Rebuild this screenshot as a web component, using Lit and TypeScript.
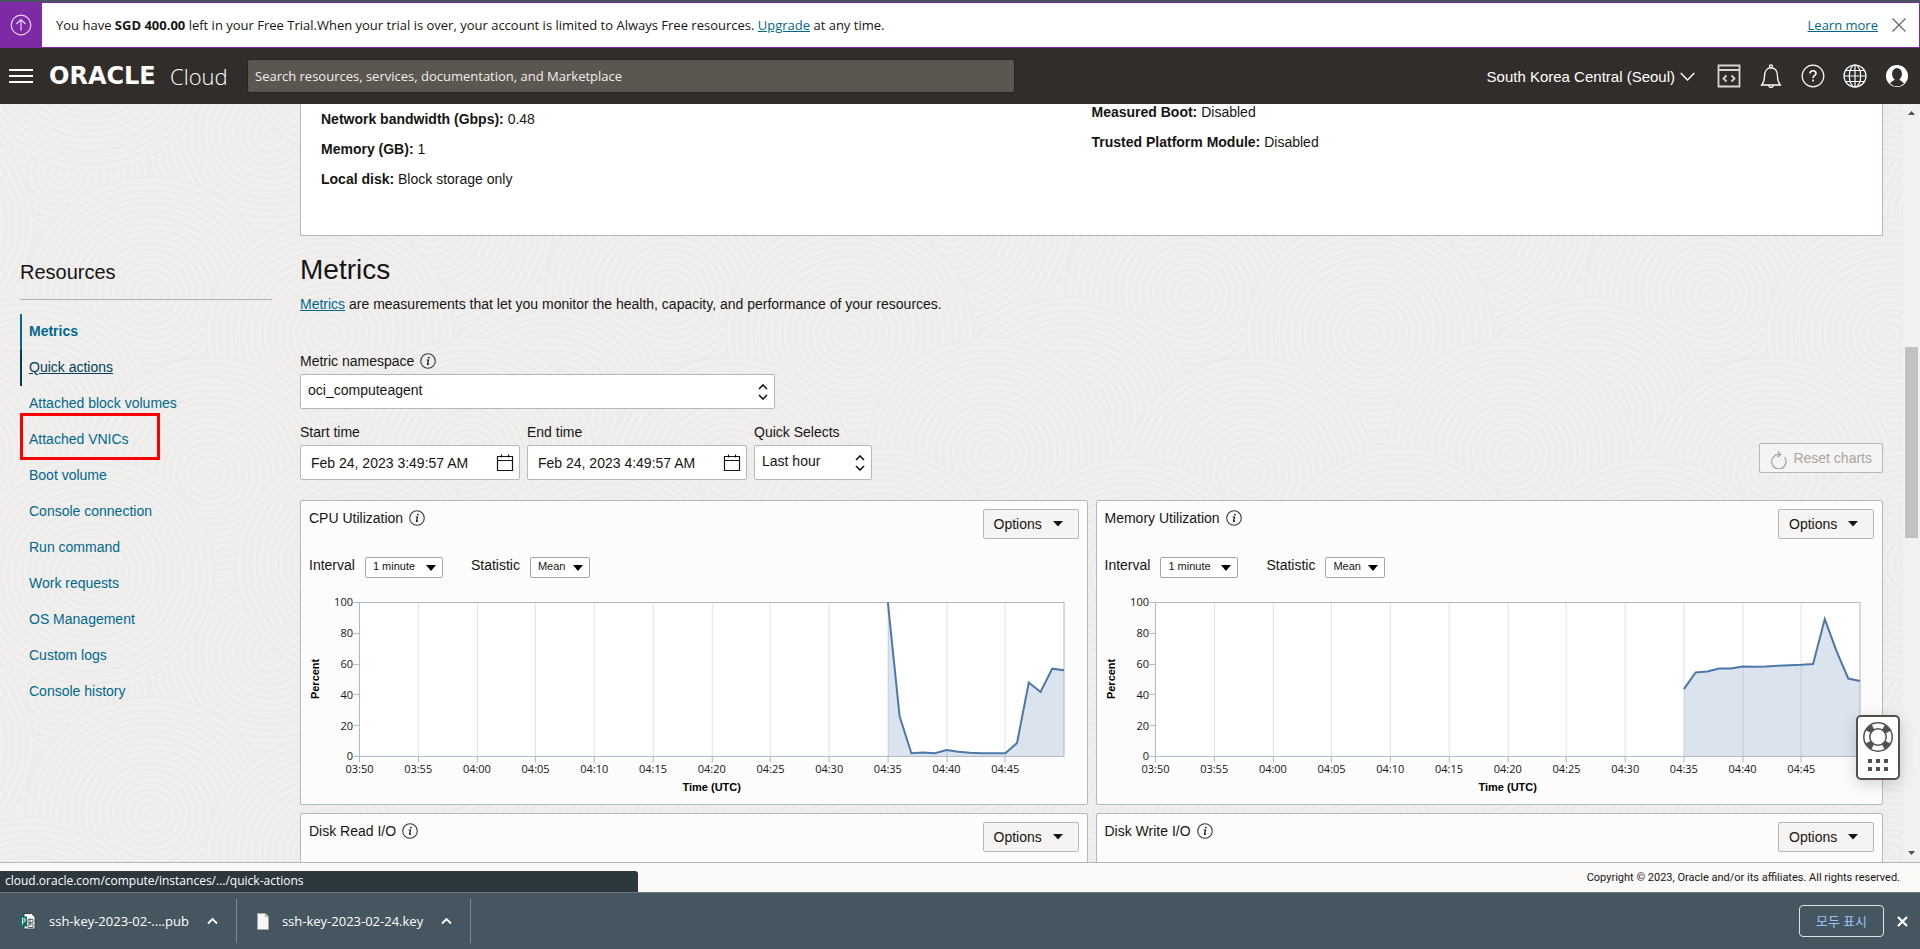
import { LitElement, html, svg, css, unsafeCSS } from "lit";
import { customElement, property } from "lit/decorators.js";

const uri = (s: string) => unsafeCSS(`url("data:image/svg+xml,${encodeURIComponent(s)}")`);

/* Faint overlapping ring texture used behind the console */
const rings = (): string => {
  const size = 520;
  const seeds = [
    [60, 70], [270, 30], [430, 120], [150, 190], [330, 230], [30, 310],
    [470, 350], [210, 370], [90, 470], [360, 460],
  ];
  let out = "";
  for (const [cx, cy] of seeds) {
    for (const dx of [-size, 0, size]) {
      for (const dy of [-size, 0, size]) {
        const x = cx + dx;
        const y = cy + dy;
        if (x < -130 || y < -130 || x > size + 130 || y > size + 130) continue;
        for (let r = 124; r > 4; r -= 7) {
          out += `<ellipse cx="${x}" cy="${y}" rx="${r}" ry="${r * 0.94}" fill="#f0efed" stroke="#ecebe9" stroke-width="2"/>`;
        }
      }
    }
  }
  return `<svg xmlns="http://www.w3.org/2000/svg" width="${size}" height="${size}">${out}</svg>`;
};

const updown = uri(
  `<svg xmlns="http://www.w3.org/2000/svg" width="10" height="16" fill="none" stroke="#161513" stroke-width="1.6"><path d="M1 5l4-4 4 4M1 11l4 4 4-4"/></svg>`
);
const down = uri(
  `<svg xmlns="http://www.w3.org/2000/svg" width="10" height="6"><path d="M0 0h10l-5 6z" fill="#000"/></svg>`
);

const shared = css`
  *, *::before, *::after { box-sizing: border-box; }
  button, input, select { font: inherit; color: inherit; margin: 0; }
  button { cursor: pointer; }
  a { color: #00688c; }
  svg { display: block; flex: none; }
  select { appearance: none; cursor: pointer; }
  .btn {
    display: flex; align-items: center; height: 30px; padding: 0 10px;
    background: #f5f4f2; border: 1px solid #bbb6b1; border-radius: 2px; font-size: 14px;
  }
`;

const infoIcon = html`<svg width="16" height="16" viewBox="0 0 16 16" aria-label="Info">
  <circle cx="8" cy="8" r="7.3" fill="none" stroke="#3a3632" stroke-width="1.1" />
  <circle cx="8.9" cy="4.6" r="0.9" fill="#161513" />
  <path d="M6.7 7h1.800l-1 4q0 .8 1.400-.3" fill="none" stroke="#161513" stroke-width="1.2" />
</svg>`;

@customElement("metric-card")
export class MetricCard extends LitElement {
  @property() heading = "";
  @property({ attribute: false }) values: number[] = [];

  static styles = [
    shared,
    css`
      :host {
        display: block; background: #fcfcfc; border: 1px solid #b0b8c2; border-radius: 2px; min-height: 305px;
        font-family: "Liberation Sans", Arial, sans-serif; font-size: 14px; color: #161513;
      }
      .head { display: flex; justify-content: space-between; align-items: flex-start; padding: 8px 8px 0; }
      .title { display: flex; align-items: center; gap: 6px; margin: 0; font-size: 14px; line-height: 18px; font-weight: 400; }
      .btn { gap: 11px; width: 96px; }
      .controls { display: flex; align-items: flex-start; gap: 10px; padding: 18px 8px 12px; line-height: 17px; }
      .controls select {
        height: 21px; padding: 0 20px 2px 7px; font-size: 11px; background: #fff ${down} no-repeat right 6px top 7px;
        border: 1px solid #aba59f; border-radius: 2px;
      }
      .interval { width: 78px; margin-right: 18px; }
      .statistic { width: 60px; }
      .chart { width: 100%; height: auto; }
      .tick { font: 11px "Open Sans", "Noto Sans", sans-serif; fill: #161513; }
      .axis { font: bold 11px "Liberation Sans", Arial, sans-serif; fill: #000; }
    `,
  ];

  private chart() {
    const x0 = 58.5, x1 = 763.5, y0 = 12.5, y1 = 166.5;
    const px = (m: number) => x0 + (m / 60) * (x1 - x0);
    const py = (v: number) => y1 - (v / 100) * (y1 - y0);
    const line = this.values.map((v, i) => `${px(45 + i)},${py(v)}`).join(" ");
    const times = Array.from({ length: 12 }, (_, i) => {
      const t = 230 + i * 5;
      return `0${Math.floor(t / 60)}:${String(t % 60).padStart(2, "0")}`;
    });
    const snap = (n: number) => Math.floor(n) + 0.5;
    return html`<svg class="chart" viewBox="0 0 786 214" role="img" aria-label=${this.heading}>
      <rect x=${x0} y=${y0} width=${x1 - x0} height=${y1 - y0} fill="#fff" />
      ${times.map((t, i) => svg`
        <line x1=${snap(px(i * 5))} x2=${snap(px(i * 5))} y1=${y0} y2=${y1} stroke="#e2e2e2" />
        <line x1=${snap(px(i * 5))} x2=${snap(px(i * 5))} y1=${y1} y2=${y1 + 6} stroke="#b0b8c2" />
        <text class="tick" x=${px(i * 5)} y="183" text-anchor="middle">${t}</text>`)}
      ${[0, 20, 40, 60, 80, 100].map((v) => svg`
        <line x1=${x0 - 6} x2=${x0} y1=${snap(py(v))} y2=${snap(py(v))} stroke="#b0b8c2" />
        <text class="tick" x="52" y=${py(v) + 4} text-anchor="end">${v}</text>`)}
      <polygon points="${px(45)},${y1} ${line} ${x1},${y1}" fill="#4c78a8" fill-opacity="0.2" />
      <rect x=${x0} y=${y0} width=${x1 - x0} height=${y1 - y0} fill="none" stroke="#b0b8c2" />
      <polyline points=${line} fill="none" stroke="#4c78a8" stroke-width="2" />
      <text class="axis" x="411" y="201" text-anchor="middle">Time (UTC)</text>
      <text class="axis" x="0" y="0" text-anchor="middle" transform="translate(18 89) rotate(-90)">Percent</text>
    </svg>`;
  }

  render() {
    return html`
      <div class="head">
        <h3 class="title">${this.heading} ${infoIcon}</h3>
        <button class="btn">Options
          <svg width="10" height="6" viewBox="0 0 10 6"><path d="M0 0h10L5 5.500z" fill="#161513" /></svg>
        </button>
      </div>
      ${this.values.length
        ? html`<div class="controls">
              <label for="interval">Interval</label>
              <select id="interval" class="interval"><option>1 minute</option></select>
              <label for="statistic">Statistic</label>
              <select id="statistic" class="statistic"><option>Mean</option></select>
            </div>
            ${this.chart()}`
        : null}
    `;
  }
}

const CPU = [100, 26, 2, 2.6, 2.1, 4.1, 3, 2.3, 2, 2, 2.1, 8.7, 48, 41.8, 57, 56];
const MEMORY = [43.7, 54.5, 55.2, 57.1, 57.1, 58.4, 58.2, 58.4, 58.9, 59.3, 59.5, 60, 89.2, 68.4, 50.6, 49];

const RESOURCES = [
  "Metrics", "Quick actions", "Attached block volumes", "Attached VNICs", "Boot volume", "Console connection",
  "Run command", "Work requests", "OS Management", "Custom logs", "Console history",
];
const STATE: Record<string, string> = { Metrics: "current", "Quick actions": "hovered", "Attached VNICs": "marked" };

@customElement("app-root")
export class AppRoot extends LitElement {
  static styles = [
    shared,
    css`
      :host {
        display: flex; flex-direction: column; height: 100vh; overflow: hidden;
        font-family: "Liberation Sans", Arial, sans-serif; font-size: 14px; color: #161513;
      }
      .ui { font-family: "Open Sans", "Noto Sans", sans-serif; font-size: 13px; }

      .trial { display: flex; align-items: stretch; height: 48px; flex: none; border-top: 2px solid #455660; }
      .trial-body {
        display: flex; align-items: center; flex: 1; padding: 0 13px 0 14px;
        border: 1px solid #7e2aa5; border-left: 0; background: #fff;
      }
      .trial-icon { display: flex; align-items: center; justify-content: center; width: 42px; background: #7e2aa5; }
      .trial-text { flex: 1; margin: 0; }
      .icon-btn { display: flex; align-items: center; justify-content: center; padding: 0; border: 0; background: none; }
      .dismiss { margin-left: 14px; }

      .top { display: flex; align-items: center; height: 56px; flex: none; padding: 0 11px 0 9px; background: #312d2a; color: #fff; }
      .brand { display: flex; align-items: center; width: 198px; margin-left: 16px; color: #fff; text-decoration: none; }
      .oracle { width: 121px; font: bold 24px/26px "DejaVu Sans", sans-serif; }
      .cloud { font: 300 22px/26px "Open Sans", sans-serif; }
      .search {
        width: 40vw; height: 34px; padding: 0 7px; border: 1px solid #282320; border-radius: 3px;
        background: #5b564f; outline: 0;
      }
      .search::placeholder { color: #f1efed; opacity: 1; }
      .region { display: flex; align-items: center; gap: 5px; margin-left: auto; padding: 0; border: 0; background: none; font-size: 15px; }
      .tools { display: flex; align-items: center; gap: 18px; margin-left: 22px; }

      .main { display: flex; flex: 1; min-height: 0; overflow: hidden; background: #f0efed ${uri(rings())}; }
      .side { width: 252px; flex: none; margin: 0 28px 0 20px; padding-top: 156px; }
      .side-title { margin: 0; padding-bottom: 15px; border-bottom: 1px solid #b5b2ae; font-size: 20px; line-height: 24px; font-weight: 400; }
      .nav { list-style: none; margin: 14px 0 0; padding: 0; }
      .item { position: relative; display: flex; align-items: center; height: 36px; padding: 0 0 2px 9px; }
      .item a { text-decoration: none; }
      .current { border-left: 2px solid #00688c; padding-left: 7px; font-weight: 700; }
      .hovered { border-left: 2px solid #003f57; padding-left: 7px; }
      .item.hovered a { color: #003f57; text-decoration: underline; }
      .marked::after { content: ""; position: absolute; left: 0; top: -9px; width: 140px; height: 47px; border: 3px solid #f80000; }

      .content { flex: 1; min-width: 0; margin-right: 20px; }
      .details { display: grid; grid-template-columns: 1fr 1fr; height: 132px; padding: 0 20px; background: #fff; border: 1px solid #bbb6b1; border-top: 0; }
      .facts { display: flex; flex-direction: column; gap: 14px; margin: 0; line-height: 16px; }
      .facts-left { padding-top: 7px; }
      .facts dt, .facts dd { display: inline; margin: 0; }
      .facts dt { font-weight: 700; }
      .h2 { margin: 17px 0 7px; font-size: 28px; line-height: 34px; font-weight: 400; }
      .lead { margin: 0 0 38px; line-height: 20px; }
      .label { display: flex; align-items: center; gap: 6px; line-height: 18px; margin-bottom: 4px; }
      .select, .date { height: 35px; border: 1px solid #bbb6b1; border-radius: 2px; background-color: #fff; }
      .select { width: 100%; padding: 0 24px 3px 7px; background-image: ${updown}; background-repeat: no-repeat; background-position: right 6px center; }
      .namespace { width: 30%; margin-bottom: 14px; }
      .fields { display: flex; align-items: flex-end; gap: 7px; margin-bottom: 20px; }
      .date { display: flex; align-items: center; width: 220px; padding: 0 5px 0 10px; }
      .date input { flex: 1; min-width: 0; padding: 0; border: 0; outline: 0; background: none; }
      .quick { width: 118px; }
      .reset { margin: 0 0 7px auto; gap: 6px; color: #aaa49f; }
      .reset svg { margin-top: 4px; }
      .cards { display: grid; grid-template-columns: 1fr 1fr; gap: 8px; }

      .scroll { display: flex; flex-direction: column; width: 17px; flex: none; background: #f1f1f1; align-items: center; }
      .track { flex: 1; width: 13px; padding-top: 226px; }
      .thumb { height: 191px; background: #c1c1c1; }

      .foot { position: relative; display: flex; align-items: center; justify-content: flex-end; height: 30px; flex: none; padding-right: 20px; background: #fbf9f8; border-top: 1px solid #bbb6b1; }
      .copy { font: 11px Roboto, sans-serif; }
      .status { position: absolute; left: 0; bottom: 0; width: 638px; height: 21px; padding-left: 5px; line-height: 20px; font-size: 12px; color: #fff; background: #2d373e; border-radius: 0 3px 0 0; }

      .shelf { display: flex; align-items: center; height: 57px; flex: none; padding-right: 12px; background: #455660; border-top: 1px solid #6d7b83; color: #fff; }
      .file { display: flex; align-items: center; height: 44px; padding: 0 18px 0 20px; border-right: 1px solid #7c8990; }
      .file-name { margin: 0 18px 0 13px; }
      .all { height: 32px; width: 85px; margin: 0 13px 0 auto; padding: 0; border: 1px solid #dfe3e5; border-radius: 4px; background: none; color: #9ec3fb; font: 13px/18px "Noto Sans CJK KR", sans-serif; }

      .help {
        position: fixed; right: 20px; bottom: 169px; width: 44px; height: 65px; display: flex; flex-direction: column;
        align-items: center; gap: 7px; padding: 5px 0 0; border: 2px solid #55504b; border-radius: 5px; background: #fff;
        box-shadow: 0 4px 16px rgba(0, 0, 0, 0.16);
      }
    `,
  ];

  private calendar = html`<button class="icon-btn" aria-label="Open calendar"><svg width="18" height="18" viewBox="0 0 18 18" fill="none" stroke="#161513" stroke-width="1.2">
    <path d="M1.500 2.500h15v14h-15zM1.500 6.500h15M5.500 .5v3M12.500 .5v3" /></svg></button>`;

  private caret = html`<button class="icon-btn" aria-label="File options"><svg width="11" height="8" viewBox="0 0 11 8" fill="none" stroke="#fff" stroke-width="1.8"><path d="M1 6.5l4.5-4.5L10 6.5" /></svg></button>`;

  render() {
    return html`
      <div class="trial ui">
        <div class="trial-icon">
          <svg width="22" height="22" viewBox="0 0 22 22" fill="none" stroke="#e9d5f2" stroke-width="1.2">
            <circle cx="11" cy="11" r="9.8" /><path d="M11 16.5v-11M6.5 10L11 5.5l4.5 4.5" />
          </svg>
        </div>
        <div class="trial-body">
          <p class="trial-text">You have <b>SGD 400.00</b> left in your Free Trial.When your trial is over, your account is limited to Always Free resources. <a href="#upgrade">Upgrade</a> at any time.</p>
          <a href="#learn">Learn more</a>
          <button class="icon-btn dismiss" aria-label="Close">
            <svg width="14" height="14" viewBox="0 0 14 14" stroke="#66625e" stroke-width="1.2"><path d="M.5.5l13 13M13.5.5l-13 13" /></svg>
          </button>
        </div>
      </div>

      <header class="top">
        <button class="icon-btn" aria-label="Menu">
          <svg width="24" height="14" viewBox="0 0 24 14" fill="#fff"><path d="M0 0h24v2H0zM0 6h24v2H0zM0 12h24v2H0z" /></svg>
        </button>
        <a class="brand" href="#home"><span class="oracle">ORACLE</span><span class="cloud">Cloud</span></a>
        <input class="search ui" type="search" aria-label="Search" placeholder="Search resources, services, documentation, and Marketplace" />
        <button class="region">South Korea Central (Seoul)
          <svg width="15" height="9" viewBox="0 0 15 9" fill="none" stroke="#fff" stroke-width="1.4"><path d="M.7 1l6.8 7 6.8-7" /></svg>
        </button>
        <div class="tools">
          <button class="icon-btn" aria-label="Developer tools">
            <svg width="24" height="24" viewBox="0 0 24 24" fill="none" stroke="#d8d5d2" stroke-width="1.8">
              <path d="M1.5 1.5h21v21h-21zM1.5 6h21M9.5 11.5l-3 3 3 3M14.5 11.5l3 3-3 3" />
            </svg>
          </button>
          <button class="icon-btn" aria-label="Announcements">
            <svg width="24" height="24" viewBox="0 0 24 24" fill="none" stroke="#fff" stroke-width="1.3">
              <circle cx="12" cy="2.3" r="1.5" />
              <path d="M2.7 21h18.6q-2.8-3.4-2.8-8.5C18.500 7 16 3.900 12 3.900S5.500 7 5.500 12.500q0 5.100-2.800 8.500zM9.800 21.200a2.200 2.200 0 0 0 4.400 0" />
            </svg>
          </button>
          <button class="icon-btn" aria-label="Help">
            <svg width="24" height="24" viewBox="0 0 24 24" fill="none" stroke="#fff" stroke-width="1.2">
              <circle cx="12" cy="12" r="10.800" />
              <path d="M9 9.600q0-2.900 3-2.900t3 2.700c0 2-2.900 2.100-2.900 4.600M12.100 15.600v2" stroke-width="1.600" />
            </svg>
          </button>
          <button class="icon-btn" aria-label="Language">
            <svg width="24" height="24" viewBox="0 0 24 24" fill="none" stroke="#fff" stroke-width="1.200">
              <circle cx="12" cy="12" r="11" /><ellipse cx="12" cy="12" rx="5.700" ry="11" />
              <path d="M12 1v22M1 12h22M3 6.500h18M3 17.500h18" />
            </svg>
          </button>
          <button class="icon-btn" aria-label="Profile">
            <svg width="24" height="24" viewBox="0 0 24 24">
              <circle cx="12" cy="12" r="11" fill="#fff" />
              <ellipse cx="12" cy="10" rx="5" ry="6" fill="#312d2a" />
              <path d="M5 19.500q2.500-3.800 7-3.800t7 3.800q-3 2.800-7 2.800t-7-2.800z" fill="#312d2a" />
              <path d="M9.500 14.500h5v2.500q-2.500 1.500-5 0z" fill="#312d2a" />
            </svg>
          </button>
        </div>
      </header>

      <main class="main">
        <nav class="side">
          <h2 class="side-title">Resources</h2>
          <ul class="nav">
            ${RESOURCES.map((r) => html`<li class="item ${STATE[r] ?? ""}"><a href="#${r}">${r}</a></li>`)}
          </ul>
        </nav>

        <div class="content">
          <section class="details">
            <dl class="facts facts-left">
              <div><dt>Network bandwidth (Gbps):</dt> <dd>0.48</dd></div>
              <div><dt>Memory (GB):</dt> <dd>1</dd></div>
              <div><dt>Local disk:</dt> <dd>Block storage only</dd></div>
            </dl>
            <dl class="facts">
              <div><dt>Measured Boot:</dt> <dd>Disabled</dd></div>
              <div><dt>Trusted Platform Module:</dt> <dd>Disabled</dd></div>
            </dl>
          </section>

          <h2 class="h2">Metrics</h2>
          <p class="lead"><a href="#metrics">Metrics</a> are measurements that let you monitor the health, capacity, and performance of your resources.</p>

          <div class="namespace">
            <label class="label" for="ns">Metric namespace ${infoIcon}</label>
            <select id="ns" class="select"><option>oci_computeagent</option></select>
          </div>
          <div class="fields">
            <div>
              <label class="label" for="start">Start time</label>
              <div class="date"><input id="start" type="text" value="Feb 24, 2023 3:49:57 AM" />${this.calendar}</div>
            </div>
            <div>
              <label class="label" for="end">End time</label>
              <div class="date"><input id="end" type="text" value="Feb 24, 2023 4:49:57 AM" />${this.calendar}</div>
            </div>
            <div class="quick">
              <label class="label" for="quick">Quick Selects</label>
              <select id="quick" class="select"><option>Last hour</option></select>
            </div>
            <button class="btn reset" disabled>
              <svg width="17" height="18" viewBox="0 0 17 18" fill="none" stroke="#aaa49f" stroke-width="1.300">
                <path d="M14.500 6.200a7.200 7.200 0 1 1-6-2.800h2M7.600.6l3 2.800-3 2.800" />
              </svg>
              Reset charts
            </button>
          </div>

          <div class="cards">
            <metric-card heading="CPU Utilization" .values=${CPU}></metric-card>
            <metric-card heading="Memory Utilization" .values=${MEMORY}></metric-card>
            <metric-card heading="Disk Read I/O"></metric-card>
            <metric-card heading="Disk Write I/O"></metric-card>
          </div>
        </div>

        <div class="scroll" aria-hidden="true">
          <svg width="7" height="17" viewBox="0 0 7 17"><path d="M0 11l3.500-4L7 11z" fill="#505050" /></svg>
          <div class="track"><div class="thumb"></div></div>
          <svg width="7" height="17" viewBox="0 0 7 17"><path d="M0 6l3.500 4L7 6z" fill="#505050" /></svg>
        </div>
      </main>

      <footer class="foot">
        <span class="copy">Copyright © 2023, Oracle and/or its affiliates. All rights reserved.</span>
        <div class="status ui">cloud.oracle.com/compute/instances/.../quick-actions</div>
      </footer>

      <div class="shelf ui">
        <div class="file">
          <svg width="16" height="17" viewBox="0 0 16 17">
            <path d="M4 .5h7.500l3.500 3.500v12H4z" fill="#fff" stroke="#333c41" />
            <path d="M8 6.500h5v3H8zM8 11h5v3.500H8zM10 5v8" fill="none" stroke="#5c6468" />
            <path d="M0 3.500h7v10H0z" fill="#0a7565" />
            <path d="M2.500 11.500v-6h1.300q1.500 0 1.500 1.600T3.800 8.700H2.500" fill="none" stroke="#fff" />
          </svg>
          <span class="file-name">ssh-key-2023-02-....pub</span>${this.caret}
        </div>
        <div class="file">
          <svg width="12" height="17" viewBox="0 0 12 17"><path d="M.5.5h8l3 3v13H.5z" fill="#f6f6f6" stroke="#a5a5a5" /><path d="M8.500.5v3h3" fill="none" stroke="#a5a5a5" /></svg>
          <span class="file-name">ssh-key-2023-02-24.key</span>${this.caret}
        </div>
        <button class="all">모두 표시</button>
        <button class="icon-btn" aria-label="Close downloads">
          <svg width="11" height="11" viewBox="0 0 11 11" stroke="#fff" stroke-width="2.200"><path d="M1 1l9 9M10 1l-9 9" /></svg>
        </button>
      </div>

      <button class="help" aria-label="Support">
        <svg width="30" height="30" viewBox="0 0 30 30" fill="none" stroke="#55504b">
          <circle cx="15" cy="15" r="14.200" stroke-width="1.500" />
          <circle cx="15" cy="15" r="8.200" stroke-width="1.500" />
          <circle cx="15" cy="15" r="11" stroke-width="6" stroke-dasharray="6.500 10.779" transform="rotate(28 15 15)" />
        </svg>
        <svg width="20" height="12" viewBox="0 0 20 12" fill="#55504b">
          <path d="M0 0h4v4H0zM8 0h4v4H8zM16 0h4v4h-4zM0 8h4v4H0zM8 8h4v4H8zM16 8h4v4h-4z" />
        </svg>
      </button>
    `;
  }
}
